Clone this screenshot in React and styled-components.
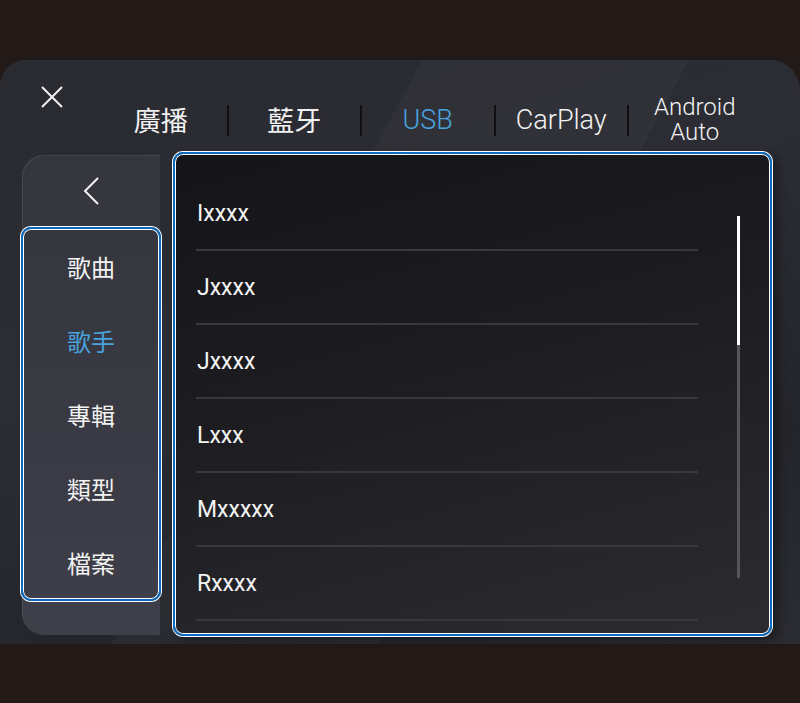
import React from "react";
import styled, { createGlobalStyle } from "styled-components";

const Global = createGlobalStyle`
  html, body { margin: 0; padding: 0; background: #231a18; }
  body { width: 800px; height: 703px; overflow: hidden; font-family: Roboto, "Noto Sans CJK TC", sans-serif; }
  *, *::before, *::after { box-sizing: border-box; }
`;

const Screen = styled.div`
  width: 800px;
  height: 703px;
  display: flex;
  flex-direction: column;
  background: #231a18;
`;

const TopBand = styled.div`
  height: 60px;
  background: #231a18;
  border-bottom: 2px solid #1b1a1d;
`;

const Panel = styled.div`
  height: 584px;
  border-radius: 26px 30px 0 0;
  background:
    linear-gradient(118deg, rgba(255,255,255,0) 0%, rgba(255,255,255,0) 38%, rgba(255,255,255,0.025) 38%, rgba(255,255,255,0.025) 62%, rgba(255,255,255,0) 62%),
    linear-gradient(160deg, #2a2b31 0%, #2c2d34 40%, #24252a 75%, #2b2c32 100%);
  display: flex;
  flex-direction: column;
`;

const Header = styled.div`
  height: 92px;
  display: flex;
  align-items: flex-start;
  padding-left: 41px;
`;

const CloseBtn = styled.div`
  width: 22px;
  height: 22px;
  margin-top: 26px;
  display: flex;
`;

const Tabs = styled.div`
  margin-left: 32px;
  margin-top: 42px;
  display: flex;
  align-items: center;
  height: 36px;
`;

const Tab = styled.div`
  width: 131.5px;
  text-align: center;
  font-family: ${(p) => (p.$latin ? "Roboto, sans-serif" : "\"Noto Sans CJK TC\", sans-serif")};
  font-weight: ${(p) => (p.$latin ? 300 : 400)};
  font-size: ${(p) => (p.$small ? "24px" : "27px")};
  line-height: ${(p) => (p.$small ? "25px" : "36px")};
  color: ${(p) => (p.$active ? "#49a2de" : "#f2f2f2")};
  white-space: nowrap;
`;

const TabLine = styled.div`
  height: 25px;
  line-height: 25px;
`;

const Separator = styled.div`
  width: 2px;
  height: 31px;
  background: #101013;
`;

const Body = styled.div`
  display: flex;
  align-items: flex-start;
  padding-left: 22px;
`;

const Sidebar = styled.div`
  width: 138px;
  height: 480px;
  margin-top: 3px;
  border-radius: 22px 0 0 22px;
  background: linear-gradient(180deg, #34353d 0%, #393a43 60%, #3f3f4a 100%);
  box-shadow: inset 1px 1px 0 rgba(255,255,255,0.08);
  display: flex;
  flex-direction: column;
`;

const BackBtn = styled.div`
  height: 72px;
  display: flex;
  align-items: center;
  justify-content: center;
`;

const FocusBox = styled.div`
  margin: 0 -1px;
  border: 2px solid #0a6cc1;
  border-radius: 10px;
  box-shadow: 0 0 0 1px #ffffff, inset 0 0 0 1px #ffffff;
  display: flex;
  flex-direction: column;
`;

const MenuItem = styled.div`
  height: 74px;
  display: flex;
  align-items: center;
  justify-content: center;
  font-family: "Noto Sans CJK TC", sans-serif;
  font-size: 24px;
  color: ${(p) => (p.$active ? "#49a2de" : "#f2f2f2")};
`;

const ListPanel = styled.div`
  margin-left: 13px;
  width: 599px;
  height: 484px;
  border: 2px solid #0a6cc1;
  border-radius: 10px;
  box-shadow: 0 0 0 1px #ffffff, inset 0 0 0 1px #ffffff, 6px 4px 10px rgba(0,0,0,0.35);
  background: linear-gradient(165deg, #151519 0%, #1c1c20 40%, #2b2b30 100%);
  display: flex;
  padding-left: 21px;
`;

const ListCol = styled.div`
  width: 502px;
  padding-top: 23px;
  display: flex;
  flex-direction: column;
`;

const Row = styled.div`
  height: 74px;
  border-bottom: 2px solid #38393e;
  display: flex;
  align-items: center;
  padding-left: 1px;
  font-size: 23px;
  color: #f4f4f4;
`;

const ScrollTrack = styled.div`
  margin-left: 39px;
  margin-top: 62px;
  width: 3px;
  height: 362px;
  background: #55565b;
  display: flex;
  flex-direction: column;
`;

const ScrollThumb = styled.div`
  height: 129px;
  background: #ffffff;
`;

const tabs = [
  { label: "廣播" },
  { label: "藍牙" },
  { label: "USB", active: true, latin: true },
  { label: "CarPlay", latin: true },
  { label: "Android\nAuto", small: true, latin: true },
];

const menu = ["歌曲", "歌手", "專輯", "類型", "檔案"];
const rows = ["Ixxxx", "Jxxxx", "Jxxxx", "Lxxx", "Mxxxxx", "Rxxxx"];

export default function App() {
  return (
    <Screen>
      <Global />
      <TopBand />
      <Panel>
        <Header>
          <CloseBtn>
            <svg width="22" height="22" viewBox="0 0 22 22">
              <path d="M1 1 L21 21 M21 1 L1 21" stroke="#f2f2f2" strokeWidth="2" fill="none" />
            </svg>
          </CloseBtn>
          <Tabs>
            {tabs.map((t, i) => (
              <React.Fragment key={i}>
                {i > 0 && <Separator />}
                <Tab $active={t.active} $small={t.small} $latin={t.latin}>
                  {t.small
                    ? t.label.split("\n").map((l, j) => <TabLine key={j}>{l}</TabLine>)
                    : t.label}
                </Tab>
              </React.Fragment>
            ))}
          </Tabs>
        </Header>
        <Body>
          <Sidebar>
            <BackBtn>
              <svg width="16" height="28" viewBox="0 0 16 28">
                <path d="M15 1 L2 14 L15 27" stroke="#f2f2f2" strokeWidth="2" fill="none" />
              </svg>
            </BackBtn>
            <FocusBox>
              {menu.map((m, i) => (
                <MenuItem key={i} $active={i === 1}>{m}</MenuItem>
              ))}
            </FocusBox>
          </Sidebar>
          <ListPanel>
            <ListCol>
              {rows.map((r, i) => (
                <Row key={i}>{r}</Row>
              ))}
            </ListCol>
            <ScrollTrack>
              <ScrollThumb />
            </ScrollTrack>
          </ListPanel>
        </Body>
      </Panel>
    </Screen>
  );
}
